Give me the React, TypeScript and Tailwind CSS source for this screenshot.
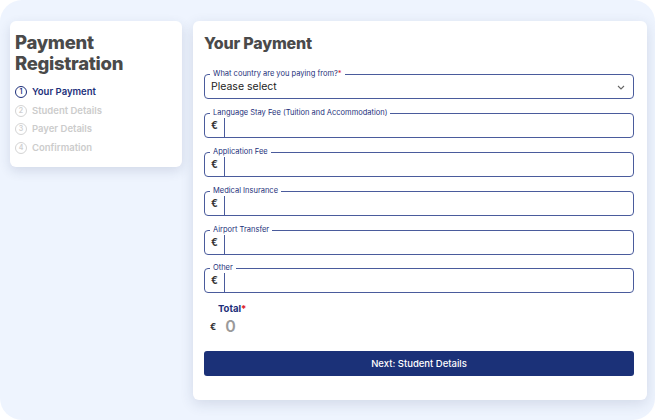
import React from "react";

const font = { fontFamily: "Inter, 'Noto Sans', sans-serif" };

function Step({ n, label, active }: { n: number; label: string; active?: boolean }) {
  return (
    <div className="flex items-center gap-[5px] h-[18.5px]">
      <div
        className={
          "w-[12px] h-[12px] rounded-full flex items-center justify-center text-[7px] font-semibold border-[1.3px] " +
          (active ? "border-[#1d2f7a] text-[#1d2f7a]" : "border-[#d4d4d4] text-[#cfcfcf]")
        }
      >
        {n}
      </div>
      <span className={"text-[9.5px] font-semibold " + (active ? "text-[#1d2f7a]" : "text-[#cccccc]")}>{label}</span>
    </div>
  );
}

function Field({ label, required, children }: { label: string; required?: boolean; children: React.ReactNode }) {
  return (
    <div className="relative h-[25px] border-[1.5px] border-[#4a5b9c] rounded-[4px] flex items-stretch">
      <span className="absolute left-[5px] top-[-6px] bg-white px-[3px] text-[7.5px] leading-[10px] text-[#1d2f7a]">
        {label}
        {required && <span className="text-[#e0202a]">*</span>}
      </span>
      {children}
    </div>
  );
}

function MoneyField({ label }: { label: string }) {
  return (
    <Field label={label}>
      <div className="w-[20px] flex items-center justify-center text-[10px] font-bold text-[#333] border-r-[1.5px] border-[#4a5b9c]">
        €
      </div>
      <div className="flex-1" />
    </Field>
  );
}

export default function App() {
  return (
    <div className="w-[655px] h-[420px] bg-white" style={font}>
      <div className="w-[655px] h-[420px] bg-[#eef4fe] rounded-[22px] flex items-start gap-[11px] pl-[10px] pt-[21px]">
        <div className="w-[172px] h-[146px] bg-white rounded-[6px] shadow-[0_4px_12px_rgba(40,60,100,0.14)] px-[5px] pt-[11px]">
          <div className="text-[18.5px] leading-[21px] font-extrabold text-[#4a4a4a] tracking-[-0.3px]">
            Payment
            <br />
            Registration
          </div>
          <div className="mt-[9px] flex flex-col">
            <Step n={1} label="Your Payment" active />
            <Step n={2} label="Student Details" />
            <Step n={3} label="Payer Details" />
            <Step n={4} label="Confirmation" />
          </div>
        </div>
        <div className="w-[454px] h-[379px] bg-white rounded-[6px] shadow-[0_4px_14px_rgba(40,60,100,0.14)] pl-[11px] pr-[13px] pt-[12px]">
          <div className="text-[16px] leading-[20px] font-extrabold text-[#4a4a4a] tracking-[-0.2px]">Your Payment</div>
          <div className="mt-[21px] flex flex-col gap-[13.9px]">
            <Field label="What country are you paying from?" required>
              <div className="flex-1 flex items-center justify-between pl-[6px] pr-[8px] pt-[1px]">
                <span className="text-[10.5px] text-[#222]">Please select</span>
                <svg width="8" height="5" viewBox="0 0 8 5" fill="none">
                  <path d="M1 1l3 3 3-3" stroke="#666" strokeWidth="1.1" />
                </svg>
              </div>
            </Field>
            <MoneyField label="Language Stay Fee (Tuition and Accommodation)" />
            <MoneyField label="Application Fee" />
            <MoneyField label="Medical Insurance" />
            <MoneyField label="Airport Transfer" />
            <MoneyField label="Other" />
          </div>
          <div className="mt-[10px] pl-[14px] text-[9.5px] font-bold text-[#1d2f7a] leading-[12px]">
            Total<span className="text-[#e0202a]">*</span>
          </div>
          <div className="mt-[1px] flex items-center gap-[9px] pl-[6px]">
            <span className="text-[9px] font-bold text-[#333]">€</span>
            <span className="text-[16px] font-semibold text-[#9a9a9a] leading-[20px]">0</span>
          </div>
          <button className="mt-[15px] w-full h-[25px] bg-[#1b3178] rounded-[3px] text-white text-[9.5px] font-medium flex items-center justify-center">
            Next: Student Details
          </button>
        </div>
      </div>
    </div>
  );
}
